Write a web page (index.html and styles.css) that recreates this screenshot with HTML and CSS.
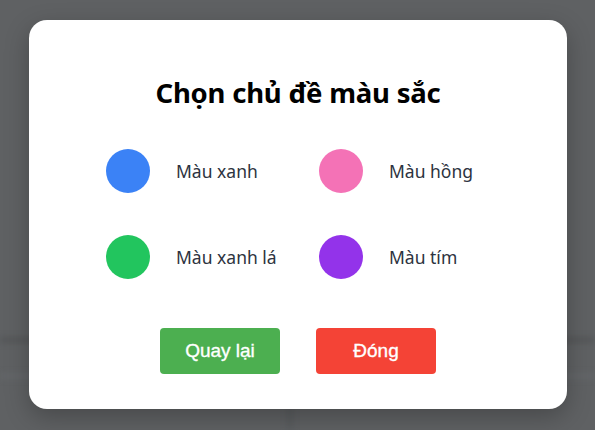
FILE: index.html
```html
<!DOCTYPE html>
<html lang="vi">
<head>
<meta charset="utf-8">
<link rel="stylesheet" href="styles.css">
</head>
<body>
<div class="backdrop">
  <div class="bg-page">
    <div class="bg-line bg-line-a"></div>
    <div class="bg-line bg-line-b"></div>
    <div class="bg-vline"></div>
  </div>
  <div class="overlay">
    <div class="modal">
      <h2 class="title">Chọn chủ đề màu sắc</h2>
      <div class="themes">
        <div class="theme"><span class="dot blue"></span><span class="label">Màu xanh</span></div>
        <div class="theme"><span class="dot pink"></span><span class="label">Màu hồng</span></div>
        <div class="theme"><span class="dot green"></span><span class="label">Màu xanh lá</span></div>
        <div class="theme"><span class="dot purple"></span><span class="label">Màu tím</span></div>
      </div>
      <div class="actions">
        <button class="btn btn-back">Quay lại</button>
        <button class="btn btn-close">Đóng</button>
      </div>
    </div>
  </div>
</div>
</body>
</html>
```
FILE: styles.css
```css
* { box-sizing: border-box; }
html, body { margin: 0; padding: 0; }
body {
  width: 595px;
  height: 430px;
  overflow: hidden;
  font-family: "Noto Sans", "Open Sans", sans-serif;
}
.backdrop {
  position: relative;
  width: 595px;
  height: 430px;
  background: #5f6163;
}
.bg-page {
  position: absolute;
  inset: 0;
  filter: blur(3px);
}
.bg-line {
  position: absolute;
  left: 0;
  right: 0;
  height: 4px;
}
.bg-line-a { top: 338px; background: #505254; }
.bg-line-b { top: 374px; background: #66696c; }
.bg-vline {
  position: absolute;
  left: 288px;
  top: 400px;
  width: 4px;
  height: 30px;
  background: #55585b;
}
.overlay {
  position: absolute;
  inset: 0;
  display: flex;
  justify-content: center;
  padding-top: 20px;
}
.modal {
  width: 538px;
  height: 389px;
  background: #fff;
  border-radius: 18px;
  box-shadow: 0 8px 24px rgba(0, 0, 0, 0.25);
  display: flex;
  flex-direction: column;
  align-items: center;
  padding-top: 57px;
  margin-left: 1px;
}
.title {
  margin: 0;
  font-size: 27.5px;
  line-height: 32px;
  font-weight: 700;
  letter-spacing: -0.2px;
  color: #000;
}
.themes {
  margin-top: 40px;
  display: grid;
  grid-template-columns: 171px 171px;
  column-gap: 42px;
  row-gap: 42px;
}
.theme {
  display: flex;
  align-items: center;
  gap: 26px;
}
.dot {
  width: 44px;
  height: 44px;
  border-radius: 50%;
  flex: none;
}
.blue { background: #3b82f6; }
.pink { background: #f472b6; }
.green { background: #22c55e; }
.purple { background: #9333ea; }
.label {
  font-size: 17.5px;
  color: #2d3340;
  white-space: nowrap;
}
.actions {
  margin-top: 49px;
  display: flex;
  gap: 36px;
}
.btn {
  width: 120px;
  height: 46px;
  border: none;
  border-radius: 4px;
  color: #fff;
  font-family: "Liberation Sans", Arial, sans-serif;
  font-size: 19px;
  -webkit-text-stroke: 0.35px #fff;
  padding: 0;
}
.btn-back { background: #4caf50; }
.btn-close { background: #f44336; }
```
